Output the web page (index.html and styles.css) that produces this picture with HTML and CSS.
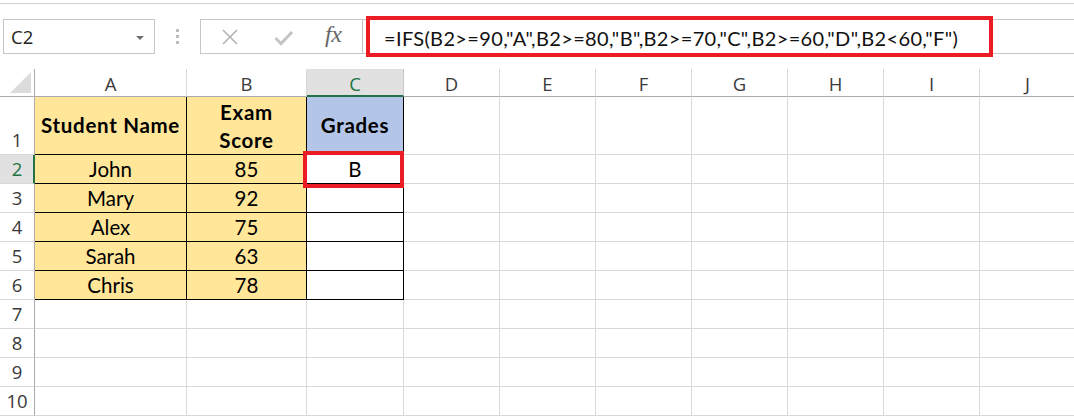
FILE: index.html
```html
<!DOCTYPE html>
<html>
<head>
<meta charset="utf-8">
<link rel="stylesheet" href="styles.css">
</head>
<body>
<div class="topline"></div>
<div class="fbar">
  <div class="namebox"><span class="nb-text">C2</span><span class="nb-arrow"></span></div>
  <div class="sep"><span class="dot"></span><span class="dot"></span><span class="dot"></span></div>
  <div class="fbtns">
    <svg class="ic-x" width="18" height="18" viewBox="0 0 18 18"><path d="M2 2 L16 16 M16 2 L2 16" stroke="#b4b4b4" stroke-width="1.6" fill="none"/></svg>
    <svg class="ic-check" width="20" height="16" viewBox="0 0 20 16"><path d="M1.5 8 L7 13.5 L18 2" stroke="#c4c4c4" stroke-width="3" fill="none"/></svg>
    <span class="ic-fx">fx</span>
  </div>
  <div class="finput">
    <span class="ftext">=IFS(B2&gt;=90,"A",B2&gt;=80,"B",B2&gt;=70,"C",B2&gt;=60,"D",B2&lt;60,"F")</span>
    <span class="hl-formula"></span>
  </div>
</div>

<div class="sheet">
  <!-- header row -->
  <div class="corner"><span class="tri"></span></div>
  <div class="ch">A</div><div class="ch">B</div><div class="ch ch-sel">C</div><div class="ch">D</div><div class="ch">E</div><div class="ch">F</div><div class="ch">G</div><div class="ch">H</div><div class="ch">I</div><div class="ch">J</div>

  <!-- row 1 -->
  <div class="rh">1</div>
  <div class="c d y b mid">Student Name</div>
  <div class="c d y b mid two">Exam<br>Score</div>
  <div class="c d bl b mid">Grades</div>
  <div class="c"></div><div class="c"></div><div class="c"></div><div class="c"></div><div class="c"></div><div class="c"></div><div class="c"></div>

  <!-- row 2 -->
  <div class="rh rh-sel">2</div>
  <div class="c d y">John</div>
  <div class="c d y">85</div>
  <div class="c d sel">B<span class="hl-cell"></span></div>
  <div class="c"></div><div class="c"></div><div class="c"></div><div class="c"></div><div class="c"></div><div class="c"></div><div class="c"></div>

  <!-- row 3 -->
  <div class="rh">3</div>
  <div class="c d y">Mary</div>
  <div class="c d y">92</div>
  <div class="c d"></div>
  <div class="c"></div><div class="c"></div><div class="c"></div><div class="c"></div><div class="c"></div><div class="c"></div><div class="c"></div>

  <!-- row 4 -->
  <div class="rh">4</div>
  <div class="c d y">Alex</div>
  <div class="c d y">75</div>
  <div class="c d"></div>
  <div class="c"></div><div class="c"></div><div class="c"></div><div class="c"></div><div class="c"></div><div class="c"></div><div class="c"></div>

  <!-- row 5 -->
  <div class="rh">5</div>
  <div class="c d y">Sarah</div>
  <div class="c d y">63</div>
  <div class="c d"></div>
  <div class="c"></div><div class="c"></div><div class="c"></div><div class="c"></div><div class="c"></div><div class="c"></div><div class="c"></div>

  <!-- row 6 -->
  <div class="rh">6</div>
  <div class="c d y">Chris</div>
  <div class="c d y">78</div>
  <div class="c d"></div>
  <div class="c"></div><div class="c"></div><div class="c"></div><div class="c"></div><div class="c"></div><div class="c"></div><div class="c"></div>

  <!-- rows 7-10 -->
  <div class="rh">7</div>
  <div class="c"></div><div class="c"></div><div class="c"></div><div class="c"></div><div class="c"></div><div class="c"></div><div class="c"></div><div class="c"></div><div class="c"></div><div class="c"></div>
  <div class="rh">8</div>
  <div class="c"></div><div class="c"></div><div class="c"></div><div class="c"></div><div class="c"></div><div class="c"></div><div class="c"></div><div class="c"></div><div class="c"></div><div class="c"></div>
  <div class="rh">9</div>
  <div class="c"></div><div class="c"></div><div class="c"></div><div class="c"></div><div class="c"></div><div class="c"></div><div class="c"></div><div class="c"></div><div class="c"></div><div class="c"></div>
  <div class="rh">10</div>
  <div class="c"></div><div class="c"></div><div class="c"></div><div class="c"></div><div class="c"></div><div class="c"></div><div class="c"></div><div class="c"></div><div class="c"></div><div class="c"></div>
</div>
</body>
</html>
```

FILE: styles.css
```css
* { box-sizing: border-box; }
html, body { margin: 0; padding: 0; background: #fff; overflow: hidden; }
body { width: 1074px; height: 416px; font-family: "Lato", "Liberation Sans", sans-serif; }

.topline { height: 4px; border-bottom: 1px solid #d2d2d2; }

.fbar { display: flex; height: 35px; margin-top: 15px; }
.namebox {
  margin-left: 3px; width: 152px; border: 1px solid #c6c6c6;
  display: flex; align-items: center; justify-content: space-between;
  padding: 0 10px 0 7px;
}
.nb-text { font-family: "Open Sans", "Noto Sans", sans-serif; font-size: 18.5px; color: #222; }
.nb-arrow { width: 0; height: 0; border-left: 4px solid transparent; border-right: 4px solid transparent; border-top: 4px solid #6f6f6f; margin-top: 2px; }

.sep { width: 45px; display: flex; flex-direction: column; align-items: center; justify-content: center; gap: 3px; }
.dot { width: 3px; height: 3px; background: #bdbdbd; }

.fbtns {
  width: 163px; border: 1px solid #c6c6c6;
  display: flex; align-items: center; padding-left: 20px;
}
.ic-x { margin-top: 1px; }
.ic-check { margin-left: 35px; margin-top: 2px; }
.ic-fx { margin-left: 31px; font-family: "Liberation Serif", serif; font-style: italic; font-size: 24px; color: #666; margin-top: -4px; letter-spacing: -0.5px; }

.finput {
  flex: 1; border: 1px solid #c6c6c6; border-right: none; border-left: none;
  position: relative; display: flex; align-items: center; padding-left: 21px;
}
.ftext { font-size: 20px; color: #111; margin-top: 2px; white-space: nowrap; letter-spacing: 0.35px; }
.hl-formula {
  position: absolute; left: 3px; top: -4px; width: 627px; height: 41px;
  border: 4px solid #ec1c24;
}

.sheet {
  margin-top: 15px;
  display: grid;
  grid-template-columns: 35px 152px 120px 97px repeat(7, 96px);
  grid-template-rows: 28px 58px repeat(9, 29px);
  width: 1076px;
}

.corner { border-right: 1px solid #ababab; border-bottom: 1px solid #ababab; position: relative; }
.tri {
  position: absolute; right: 3px; bottom: 3px; width: 0; height: 0;
  border-left: 21px solid transparent; border-bottom: 21px solid #dcdcdc;
}

.ch {
  border-right: 1px solid #d8d8d8; border-bottom: 1px solid #ababab;
  display: flex; align-items: center; justify-content: center;
  font-family: "Open Sans", "Noto Sans", sans-serif; font-size: 18.5px; color: #3a3a3a;
  padding-top: 2px;
}
.ch-sel { background: #e1e1e1; border-bottom: 2px solid #217346; color: #217346; border-right-color: #c6c6c6; }

.rh {
  border-right: 1px solid #ababab; border-bottom: 1px solid #d8d8d8;
  display: flex; align-items: flex-end; justify-content: center;
  font-family: "Open Sans", "Noto Sans", sans-serif; font-size: 18.5px; color: #3a3a3a;
  padding-bottom: 1px; line-height: 26px;
}
.rh-sel { background: #e1e1e1; border-right: 2px solid #217346; color: #217346; padding-left: 1px; }

.c {
  border-right: 1px solid #d8d8d8; border-bottom: 1px solid #d8d8d8;
  display: flex; align-items: flex-end; justify-content: center;
  font-size: 20.5px; color: #000; line-height: 26px; padding-bottom: 1px;
}
.c.d { border-right-color: #000; border-bottom-color: #000; }
.c.y { background: #ffe699; }
.c.bl { background: #b4c6e7; }
.c.b { font-weight: bold; letter-spacing: 0.7px; }
.c.mid { align-items: center; }
.c.two { text-align: center; line-height: 28px; padding-bottom: 0; }
.c.sel { position: relative; }
.hl-cell {
  position: absolute; left: -4px; top: -4px; right: -1px; bottom: -5px;
  border: 4px solid #ec1c24;
}
```
